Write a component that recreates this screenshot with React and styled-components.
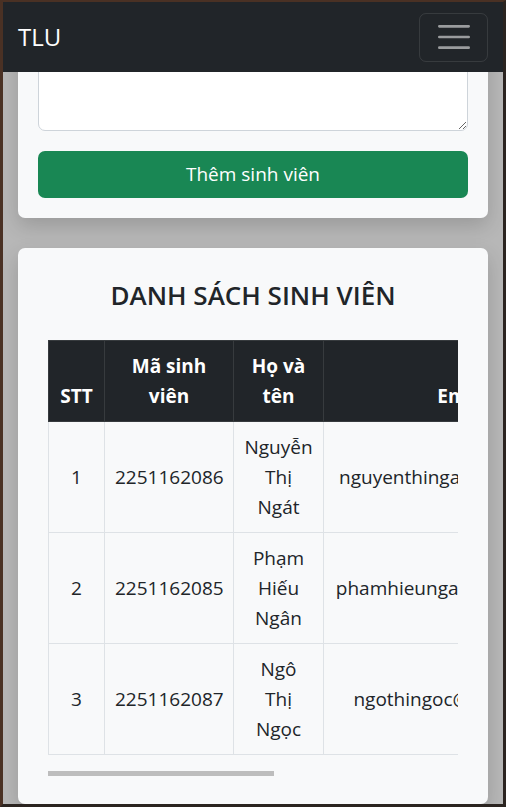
import React from "react";
import styled, { createGlobalStyle } from "styled-components";

const GlobalStyle = createGlobalStyle`
  html, body {
    margin: 0;
    padding: 0;
    overflow: hidden;
    background: #2b2420;
  }
  * { box-sizing: border-box; }
  body {
    font-family: "Open Sans", "Noto Sans", "Liberation Sans", sans-serif;
    color: #212529;
  }
`;

const Frame = styled.div`
  width: 506px;
  height: 807px;
  border-style: solid;
  border-width: 2px 3px 3px 3px;
  border-color: #4a3124 #2b2420 #2b2420 #4a3124;
  background: #b7b7b7;
  display: flex;
  flex-direction: column;
  overflow: hidden;
`;

const Navbar = styled.nav`
  flex: 0 0 70px;
  background: #212529;
  display: flex;
  align-items: center;
  justify-content: space-between;
  padding: 0 15px;
`;

const Brand = styled.a`
  color: #fff;
  font-size: 24px;
  text-decoration: none;
  line-height: 1;
`;

const Toggler = styled.button`
  width: 69px;
  height: 49px;
  border: 1px solid rgba(255, 255, 255, 0.1);
  border-radius: 7px;
  background: transparent;
  display: flex;
  align-items: center;
  justify-content: center;
  padding: 0;
`;

const Main = styled.main`
  flex: 1;
  overflow: hidden;
  padding: 0 15px;
`;

const Scrolled = styled.div`
  margin-top: ${(p) => p.$offset}px;
`;

const Card = styled.section`
  background: #f8f9fa;
  border-radius: 7px;
  box-shadow: 0 8px 20px rgba(0, 0, 0, 0.16);
  padding: ${(p) => p.$pad};
  & + & {
    margin-top: 30px;
  }
`;

const Label = styled.label`
  display: block;
  font-size: 19px;
  line-height: 30px;
  margin-bottom: 10px;
`;

const TextArea = styled.textarea`
  display: block;
  width: 100%;
  height: 130px;
  border: 1px solid #ced4da;
  border-radius: 7px;
  background: #fff;
  margin: 0 0 20px;
  font: inherit;
`;

const SubmitButton = styled.button`
  display: block;
  width: 100%;
  height: 47px;
  border: none;
  border-radius: 7px;
  background: #198754;
  color: #fff;
  font-family: inherit;
  font-size: 19px;
  line-height: 27px;
`;

const Title = styled.h3`
  margin: 0 0 28px;
  font-size: 26px;
  font-weight: 600;
  line-height: 34px;
  text-align: center;
  color: #212529;
`;

const TableWrap = styled.div`
  overflow: hidden;
`;

const ScrollThumb = styled.div`
  width: ${(p) => p.$width}px;
  height: 5px;
  background: #bdbdbd;
`;

const Table = styled.table`
  width: 744px;
  table-layout: fixed;
  border-collapse: collapse;
  margin-bottom: 16px;
  font-size: 19px;
  line-height: 30px;
  text-align: center;
`;

const Th = styled.th`
  background: #212529;
  color: #fff;
  font-weight: 700;
  vertical-align: bottom;
  padding: 10px;
  border: 1px solid #373b3e;
`;

const Td = styled.td`
  vertical-align: middle;
  padding: 10px;
  border: 1px solid #dee2e6;
  white-space: nowrap;
`;

const NameCell = styled(Td)`
  white-space: normal;
`;

const Name = styled.span`
  display: block;
  width: min-content;
  margin: 0 auto;
`;

const students = [
  { id: "2251162086", name: "Nguyễn Thị Ngát", email: "nguyenthingat@e.tlu.edu.vn", cls: "64HTTT3" },
  { id: "2251162085", name: "Phạm Hiếu Ngân", email: "phamhieungan@e.tlu.edu.vn", cls: "64HTTT3" },
  { id: "2251162087", name: "Ngô Thị Ngọc", email: "ngothingoc@e.tlu.edu.vn", cls: "64HTTT3" },
];

const VIEW_WIDTH = 410;
const TABLE_WIDTH = 744;

const MenuIcon = () => (
  <svg width="40" height="40" viewBox="0 0 30 30">
    <path
      d="M4 7h22M4 15h22M4 23h22"
      stroke="rgba(255,255,255,0.55)"
      strokeWidth="2"
      strokeLinecap="round"
    />
  </svg>
);

export default function App() {
  return (
    <>
      <GlobalStyle />
      <Frame>
        <Navbar>
          <Brand href="#">TLU</Brand>
          <Toggler aria-label="Toggle navigation">
            <MenuIcon />
          </Toggler>
        </Navbar>
        <Main>
          <Scrolled $offset={-131}>
            <Card $pad="20px">
              <Label htmlFor="note">Ghi chú</Label>
              <TextArea id="note" />
              <SubmitButton>Thêm sinh viên</SubmitButton>
            </Card>
            <Card $pad="30px 30px 28px">
              <Title>DANH SÁCH SINH VIÊN</Title>
              <TableWrap>
                <Table>
                  <colgroup>
                    <col style={{ width: 56 }} />
                    <col style={{ width: 129 }} />
                    <col style={{ width: 90 }} />
                    <col style={{ width: 280 }} />
                    <col style={{ width: 189 }} />
                  </colgroup>
                  <thead>
                    <tr>
                      <Th>STT</Th>
                      <Th>Mã sinh viên</Th>
                      <Th>Họ và tên</Th>
                      <Th>Email</Th>
                      <Th>Lớp</Th>
                    </tr>
                  </thead>
                  <tbody>
                    {students.map((s, i) => (
                      <tr key={s.id}>
                        <Td>{i + 1}</Td>
                        <Td>{s.id}</Td>
                        <NameCell>
                          <Name>{s.name}</Name>
                        </NameCell>
                        <Td>{s.email}</Td>
                        <Td>{s.cls}</Td>
                      </tr>
                    ))}
                  </tbody>
                </Table>
              </TableWrap>
              <ScrollThumb $width={Math.round((VIEW_WIDTH * VIEW_WIDTH) / TABLE_WIDTH)} />
            </Card>
          </Scrolled>
        </Main>
      </Frame>
    </>
  );
}
